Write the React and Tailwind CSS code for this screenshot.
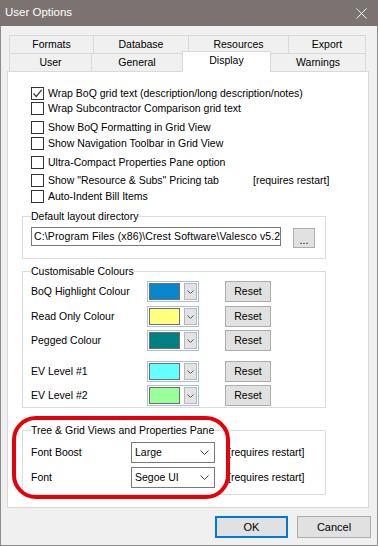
import React from "react";

const F = "font-['Liberation_Sans',Arial,sans-serif]";

function Check({ checked }) {
  return (
    <div className="w-[13px] h-[13px] border border-[#333333] bg-white flex items-center justify-center shrink-0">
      {checked && (
        <svg width="11" height="11" viewBox="0 0 11 11">
          <path d="M1.5 5.5 L4.3 8.4 L9.6 1.8" stroke="#3c3c3c" strokeWidth="1.3" fill="none" />
        </svg>
      )}
    </div>
  );
}

function Chevron({ w = 9, h = 5 }) {
  return (
    <svg width={w} height={h} viewBox="0 0 9 5">
      <path d="M0.5 0.5 L4.5 4.5 L8.5 0.5" stroke="#444" strokeWidth="1" fill="none" />
    </svg>
  );
}

function ColourCombo({ color }) {
  return (
    <div className="w-[52px] h-[21px] border border-[#a9bfd9] bg-white flex items-center pl-[1px] pr-[1px]">
      <div className="w-[32px] h-[17px] border border-[#6e6e6e]" style={{ backgroundColor: color }} />
      <div className="ml-[4px] w-[13px] h-[17px] bg-[#e3e3e3] border border-[#b8b8b8] flex items-center justify-center">
        <svg width="7" height="4" viewBox="0 0 7 4">
          <path d="M0.5 0.5 L3.5 3.5 L6.5 0.5" stroke="#555" strokeWidth="1" fill="none" />
        </svg>
      </div>
    </div>
  );
}

function ColourRow({ label, color, mt }) {
  return (
    <div className={"flex items-center h-[21px] " + mt}>
      <div className="w-[116px]">{label}</div>
      <ColourCombo color={color} />
      <div className="ml-[26px] w-[46px] h-[21px] bg-[#e1e1e1] border border-[#adadad] flex items-center justify-center">
        Reset
      </div>
    </div>
  );
}

function Combo({ value }) {
  return (
    <div className="w-[84px] h-[21px] border border-[#7a7a7a] bg-white flex items-center justify-between pl-[3px] pr-[5px]">
      <span>{value}</span>
      <Chevron />
    </div>
  );
}

const checks = [
  { t: "Wrap BoQ grid text (description/long description/notes)", c: true, mt: "mt-[15px]" },
  { t: "Wrap Subcontractor Comparison grid text", mt: "mt-[2px]" },
  { t: "Show BoQ Formatting in Grid View", mt: "mt-[6px]" },
  { t: "Show Navigation Toolbar in Grid View", mt: "mt-[3px]" },
  { t: "Ultra-Compact Properties Pane option", mt: "mt-[6px]" },
  { t: "Show \"Resource & Subs\" Pricing tab", extra: "[requires restart]", mt: "mt-[5px]" },
  { t: "Auto-Indent Bill Items", mt: "mt-[3px]" },
];

export default function App() {
  return (
    <div className={"w-[378px] h-[546px] relative bg-white text-black text-[10.5px] " + F}>
      {/* Title bar */}
      <div className="h-[26px] bg-[#7a7371] flex items-center justify-between pl-[5px] pr-[11px]">
        <span className="text-white text-[11.5px]">User Options</span>
        <svg width="11" height="11" viewBox="0 0 11 11">
          <path d="M0.5 0.5 L10.5 10.5 M10.5 0.5 L0.5 10.5" stroke="#ffffff" strokeWidth="1" />
        </svg>
      </div>

      {/* Body */}
      <div className="h-[520px] bg-[#f0f0f0] border-x border-b border-[#8c8c8c] flex flex-col">
        {/* Tabs */}
        <div className="pt-[9px] pl-[8px]">
          <div className="flex h-[18px]">
            <div className="w-[85px] border-t border-l border-r border-[#d9d9d9] flex items-center justify-center">Formats</div>
            <div className="w-[95px] border-t border-r border-[#d9d9d9] flex items-center justify-center">Database</div>
            <div className="w-[100px] border-t border-r border-[#d9d9d9] flex items-center justify-center">Resources</div>
            <div className="w-[77px] border-t border-r border-[#d9d9d9] flex items-center justify-center">Export</div>
          </div>
          <div className="flex h-[18px] items-end">
            <div className="w-[83px] h-[18px] border-t border-l border-r border-[#d9d9d9] flex items-center justify-center">User</div>
            <div className="w-[91px] h-[18px] border-t border-r border-[#d9d9d9] flex items-center justify-center">General</div>
            <div className="w-[89px] h-[21px] -mb-px -ml-px bg-white border-t border-x border-[#d9d9d9] flex items-center justify-center relative z-10 pb-[2px]">Display</div>
            <div className="w-[95px] h-[18px] border-t border-r border-[#d9d9d9] flex items-center justify-center">Warnings</div>
          </div>
        </div>

        {/* Panel */}
        <div className="ml-[6px] w-[362px] h-[437px] bg-white border border-[#d9d9d9] flex flex-col">
          <div className="pl-[23px] flex flex-col">
            {checks.map((r, i) => (
              <div key={i} className={"flex items-center h-[13px] gap-[4px] " + r.mt}>
                <Check checked={r.c} />
                <span className={r.extra ? "w-[201px] whitespace-nowrap" : "whitespace-nowrap"}>{r.t}</span>
                {r.extra && <span className="whitespace-nowrap">{r.extra}</span>}
              </div>
            ))}
          </div>

          {/* Default layout directory */}
          <fieldset className="ml-[14px] w-[304px] mt-[6px] border border-[#dcdcdc] px-[8px] pt-[4px] pb-[10px]">
            <legend className="leading-[14px]">Default layout directory</legend>
            <div className="flex items-start">
              <div className="w-[250px] h-[19px] border border-[#7a7a7a] bg-white flex items-center pl-[2px] overflow-hidden whitespace-nowrap tracking-[0.12px]">
                C:\Program Files (x86)\Crest Software\Valesco v5.2
              </div>
              <div className="ml-[12px] mt-px w-[22px] h-[20px] bg-[#e1e1e1] border border-[#adadad] flex items-end justify-center pb-[2px] leading-[10px]">
                ...
              </div>
            </div>
          </fieldset>

          {/* Customisable Colours */}
          <fieldset className="ml-[14px] w-[304px] mt-[5px] border border-[#dcdcdc] px-[8px] pt-[3px] pb-[1px]">
            <legend className="leading-[14px]">Customisable Colours</legend>
            <ColourRow label="BoQ Highlight Colour" color="#0a86cf" mt="" />
            <ColourRow label="Read Only Colour" color="#ffff80" mt="mt-[4px]" />
            <ColourRow label="Pegged Colour" color="#008080" mt="mt-[3px]" />
            <ColourRow label="EV Level #1" color="#66ffff" mt="mt-[10px]" />
            <ColourRow label="EV Level #2" color="#99ff99" mt="mt-[3px]" />
          </fieldset>

          {/* Tree & Grid */}
          <fieldset className="ml-[14px] w-[304px] mt-[15px] border border-[#dcdcdc] px-[8px] pt-[5px] pb-[6px]">
            <legend className="leading-[14px]">Tree &amp; Grid Views and Properties Pane</legend>
            <div className="flex items-center h-[21px]">
              <div className="w-[100px]">Font Boost</div>
              <Combo value="Large" />
              <span className="ml-[13px]">[requires restart]</span>
            </div>
            <div className="flex items-center h-[21px] mt-[4px]">
              <div className="w-[100px]">Font</div>
              <Combo value="Segoe UI" />
              <span className="ml-[13px]">[requires restart]</span>
            </div>
          </fieldset>
        </div>

        {/* Buttons */}
        <div className="flex justify-end gap-[9px] mt-[8px] pr-[6px]">
          <div className="w-[73px] h-[22px] bg-[#e1e1e1] border-2 border-[#0078d7] flex items-center justify-center text-[11px]">OK</div>
          <div className="w-[74px] h-[22px] bg-[#e1e1e1] border border-[#adadad] flex items-center justify-center text-[11px]">Cancel</div>
        </div>
      </div>

      {/* Red annotation */}
      <div className="absolute left-[12px] top-[416px] w-[218px] h-[83px] border-[4px] border-[#e6000b] rounded-[24px] pointer-events-none" />
    </div>
  );
}
